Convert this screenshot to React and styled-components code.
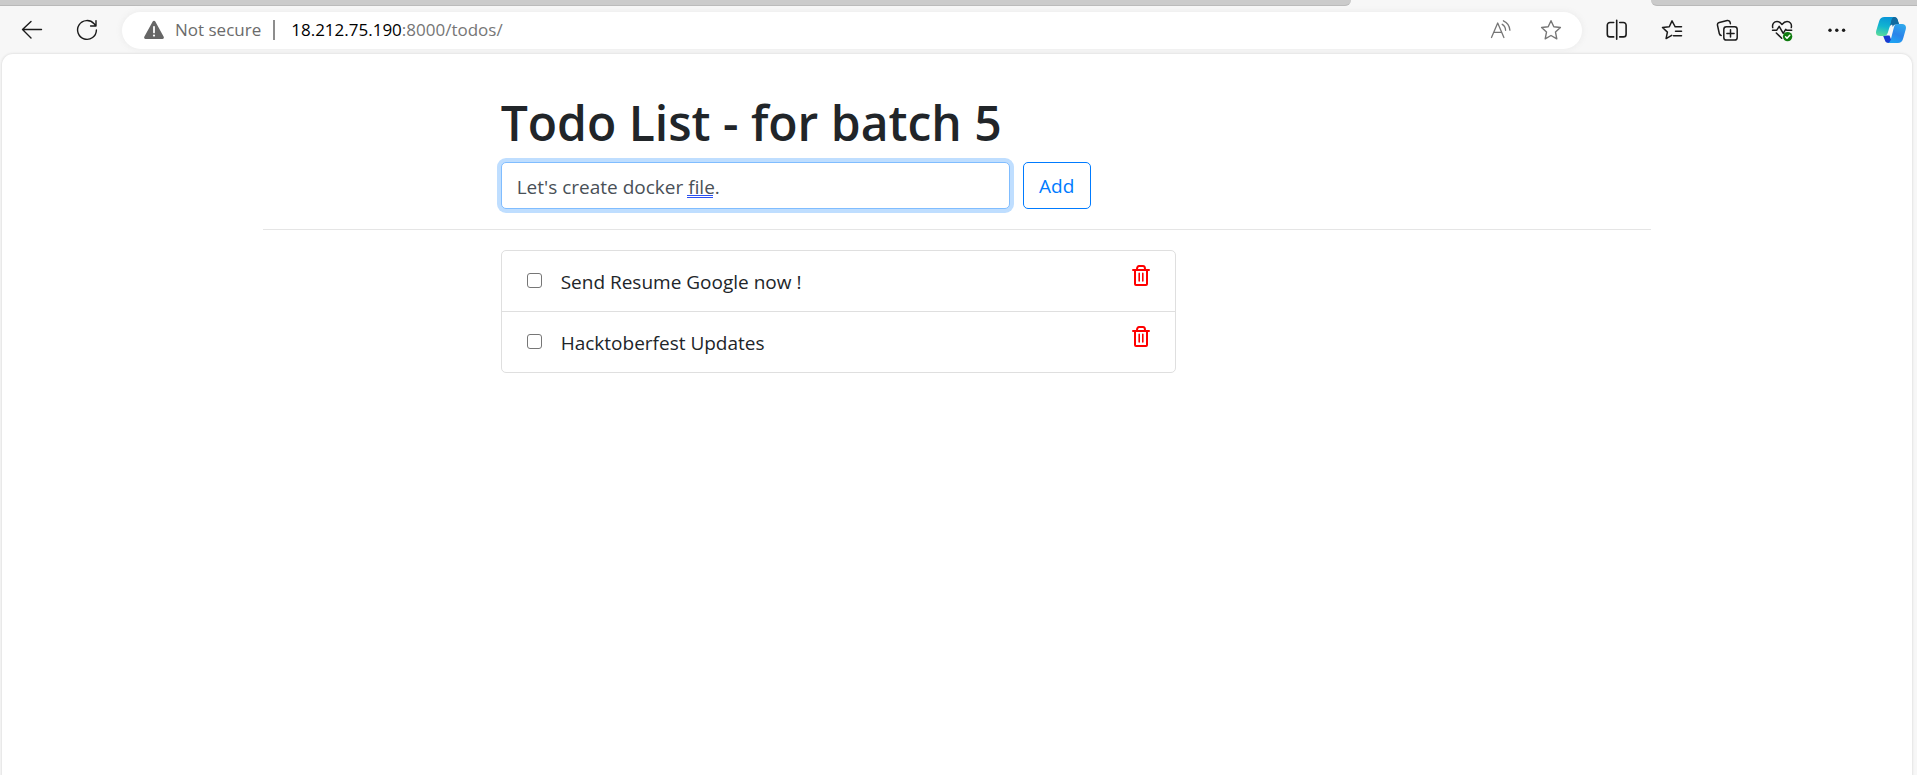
import React, { useState } from "react";
import styled, { createGlobalStyle } from "styled-components";

const GlobalStyle = createGlobalStyle`
  *, *::before, *::after { box-sizing: border-box; }
  body {
    margin: 0;
    background: #f7f7f7;
    color: #212529;
    font: 400 19px/30px "Open Sans", "Noto Sans", sans-serif;
  }
  button, input { font: inherit; }
`;

const Browser = styled.div`
  min-height: 100vh;
  display: flex;
  flex-direction: column;
`;

const TabStrip = styled.div`
  display: flex;
  height: 6px;
`;

const TabEdge = styled.div`
  flex: ${(p) => p.$grow} 1 0;
  background: ${(p) => (p.$active ? "#f7f7f7" : "#cbcbcb")};
  border-bottom: 1px solid ${(p) => (p.$active ? "#f7f7f7" : "#b9b9b9")};
  border-radius: ${(p) => p.$corners || "0"};
`;

const Toolbar = styled.header`
  display: flex;
  align-items: center;
  height: 48px;
  padding-left: 4px;
`;

const IconButton = styled.button`
  display: flex;
  align-items: center;
  justify-content: center;
  flex: none;
  width: ${(p) => p.$width || 55}px;
  height: 36px;
  padding: 0;
  border: 0;
  background: none;
  color: ${(p) => (p.$muted ? "#767676" : "#1b1b1b")};
`;

const AddressBar = styled.div`
  display: flex;
  align-items: center;
  flex: 1;
  height: 37px;
  margin: 0 7px 0 8px;
  padding: 0 6px 0 21px;
  border-radius: 19px;
  background: #fff;
  box-shadow: 0 0 5px 2px #efefef;
  font-size: 17px;
  line-height: 24px;
  color: #767676;
`;

const Security = styled.span`
  display: flex;
  align-items: center;
  gap: 10px;
  color: #6b6b6b;
`;

const Divider = styled.span`
  width: 2px;
  height: 20px;
  margin: 0 16px 0 12px;
  background: #8d8d8d;
`;

const Url = styled.span`
  flex: 1;
`;

const Host = styled.span`
  color: #000;
`;

const Page = styled.main`
  flex: 1;
  margin: 0 5px 0 2px;
  padding-top: 39px;
  border-radius: 11px 11px 0 0;
  background: #fff;
  box-shadow: 0 0 2px 1px #e4e4e4;
`;

const Container = styled.div`
  max-width: 1426px;
  margin: 0 auto;
  padding: 0 19px;
`;

const Row = styled.div`
  display: flex;
  margin: 0 -19px;
`;

const Column = styled.div`
  flex: 0 0 50%;
  margin-left: calc(100% / 6);
  padding: 0 19px;
`;

const Title = styled.h1`
  margin: 0 0 9px;
  font-size: 48px;
  line-height: 60px;
  font-weight: 600;
  white-space: nowrap;
`;

const Form = styled.form`
  display: flex;
  gap: 13px;
  max-width: 590px;
`;

const Field = styled.div`
  position: relative;
  flex: 1;
`;

const TextInput = styled.input`
  display: block;
  width: 100%;
  height: 47px;
  padding: 2px 15px 0;
  border: 1px solid #80bdff;
  border-radius: 5px;
  outline: 0;
  background: #fff;
  color: #495057;
  box-shadow: 0 0 0 4px #bfdeff;
`;

const GrammarMark = styled.span`
  position: absolute;
  left: 186px;
  top: 33px;
  width: 26px;
  height: 3px;
  border: solid #2b4ff0;
  border-width: 1px 0;
  pointer-events: none;
`;

const AddButton = styled.button`
  width: 68px;
  height: 47px;
  padding: 0;
  border: 1px solid #007bff;
  border-radius: 5px;
  background: #fff;
  color: #007bff;
`;

const Rule = styled.hr`
  margin: 20px 0;
  border: 0;
  border-top: 1px solid #e5e5e5;
`;

const List = styled.ul`
  margin: 0;
  padding: 0;
  list-style: none;
  border: 1px solid #dfdfdf;
  border-radius: 5px;
`;

const Item = styled.li`
  display: flex;
  align-items: center;
  justify-content: space-between;
  padding: 14px 25px;

  & + & { border-top: 1px solid #dfdfdf; }
`;

const ItemLabel = styled.label`
  display: flex;
  align-items: center;
  gap: 19px;
  padding-top: 2px;
`;

const Checkbox = styled.input`
  appearance: none;
  width: 15px;
  height: 15px;
  margin: 0 0 3px;
  border: 1px solid #767676;
  border-radius: 3px;
  background: #fff;

  &:checked { background: #0075ff; }
`;

const DeleteButton = styled.button`
  display: flex;
  align-self: flex-start;
  height: 21px;
  padding: 0;
  border: 0;
  background: none;
  color: #f00;
`;

const Svg = styled.svg.attrs({ "aria-hidden": true })`
  display: block;
  fill: none;
  stroke: currentColor;
  stroke-linecap: round;
  stroke-linejoin: round;
`;

const Icon = ({ size = 24, stroke = 1.4, children }) => (
  <Svg width={size} height={size} viewBox="0 0 24 24" strokeWidth={stroke}>
    {children}
  </Svg>
);

const BackIcon = () => (
  <Icon><path d="M21.5 11.5H2.5M11 3.5l-8.5 8 8.5 8.5" /></Icon>
);

const RefreshIcon = () => (
  <Icon><path d="M21.4 12a9.4 9.4 0 1 1-2.3-6.2l1.8 2M21 2.6V8h-5.4" /></Icon>
);

const WarningIcon = () => (
  <Svg width="22" height="20" viewBox="0 0 22 20">
    <path d="M9.7 1.6a1.5 1.5 0 0 1 2.6 0l8.4 15.2a1.4 1.4 0 0 1-1.2 2.1h-17a1.4 1.4 0 0 1-1.2-2.1z" fill="#666" stroke="none" />
    <path d="M11 6.8v5.6" stroke="#fff" strokeWidth="1.8" />
    <circle cx="11" cy="15.6" r="1.1" fill="#fff" stroke="none" />
  </Svg>
);

const ReadAloudIcon = () => (
  <Icon stroke={1.3}>
    <path d="M2.5 19.5L8.7 5l6.2 14.5M4.6 14.4h8.2M13.2 6.3c1.9 1 3.2 3.2 3.4 6M14.4 2.8c3.6 1.6 6.2 5 6.5 9.4" />
  </Icon>
);

const StarIcon = () => (
  <Icon>
    <path d="M12 2.7l2.8 6 6.6.8-4.9 4.6 1.3 6.7L12 17.5l-5.8 3.3 1.3-6.7-4.9-4.6 6.6-.8z" />
  </Icon>
);

const SplitIcon = () => (
  <Icon stroke={1.6}>
    <path d="M8.7 4.5H5a2.7 2.7 0 0 0-2.7 2.7v9a2.7 2.7 0 0 0 2.7 2.7h3.7M14.7 4.5h3.7a2.7 2.7 0 0 1 2.7 2.7v9a2.7 2.7 0 0 1-2.7 2.7h-3.7M11.7 2.2v19" />
  </Icon>
);

const FavoritesIcon = () => (
  <Icon stroke={1.5}>
    <path d="M18.500 8.700L15 8.500 12 2.900 9.300 8.700l-6.800.8 4.900 4.600-1.300 6.500 5.600-3.200M15 8.700h6.500M15.500 13.200h6M13.500 17.800h8" />
  </Icon>
);

const CollectionsIcon = () => (
  <Icon stroke={1.5}>
    <rect x="8.8" y="8.8" width="13.4" height="13.2" rx="2.6" />
    <path d="M15.5 11.8v7.2M11.9 15.4h7.2M6.2 17.4a2.4 2.4 0 0 1-1.9-1.9L2.5 7.3a2.4 2.4 0 0 1 1.8-2.9l7.9-1.8a2.4 2.4 0 0 1 2.9 1.8l.3 1.3" />
  </Icon>
);

const HealthIcon = () => (
  <Icon stroke={1.5}>
    <path d="M2.7 9.6C1.9 5.9 4.2 3.5 7 3.5c2.2 0 3.6 1.2 5 2.9 1.4-1.7 2.8-2.9 5-2.9 2.9 0 5.1 2.4 4.3 6.1M2.5 12.3h4.1l2.6-4 4 7 2.5-4 1 1h5M6.3 15l5.4 5.3" />
    <circle cx="17.6" cy="18.6" r="4.7" fill="#107c10" stroke="none" />
    <path d="M15.6 18.8l1.4 1.4 2.8-3" stroke="#fff" />
  </Icon>
);

const MoreIcon = () => (
  <Icon>
    <g fill="currentColor" stroke="none">
      <circle cx="5" cy="12.2" r="1.7" />
      <circle cx="11.8" cy="12.2" r="1.7" />
      <circle cx="18.6" cy="12.2" r="1.7" />
    </g>
  </Icon>
);

const CopilotIcon = () => (
  <Svg width="30" height="26" viewBox="0 0 30 26">
    <defs>
      <linearGradient id="leftRibbon" x1="0.5" y1="0" x2="0.3" y2="1">
        <stop offset="0" stopColor="#0996d8" />
        <stop offset="0.5" stopColor="#12b5d0" />
        <stop offset="1" stopColor="#5bdc9a" />
      </linearGradient>
      <linearGradient id="rightRibbon" x1="0.7" y1="0" x2="0.3" y2="1">
        <stop offset="0" stopColor="#2fa8ec" />
        <stop offset="0.55" stopColor="#2b83ea" />
        <stop offset="1" stopColor="#1da5f3" />
      </linearGradient>
    </defs>
    <g stroke="none">
      <path d="M14 0h4c2 0 3 1 3.6 2.7L23 7.500H17c-2 0-3 1-3.500 3z" fill="#126a9f" />
      <path d="M7 18.500h6.500l3 7.500h-4c-2 0-3-.8-3.700-3z" fill="#183bd0" />
      <path d="M8.500 0H18.500c-1.700.4-2.500 1.900-3 3.500l-3.700 12.200C11 18.300 9.500 19 7.500 19H4c-3.200 0-4.700-2-3.700-5.600L3.200 4C4 1.300 5.800 0 8.500 0z" fill="url(#leftRibbon)" />
      <path d="M21.500 7H26c3.200 0 4.600 2 3.700 5.500L27 22c-.8 2.700-2.500 4-5.200 4H11.800c1.800-.4 2.500-1.900 3-3.500L18 10c.6-2 1.500-3 3.500-3z" fill="url(#rightRibbon)" />
      <path d="M18 0c2 0 3 1 3.600 2.700L23 7h-2c-2.500 0-3.500 1.200-4.200 3l-1.500-5.500C15.900 2 16.500.5 18 0z" fill="#126a9f" />
    </g>
  </Svg>
);

const TrashIcon = () => (
  <Svg width="18" height="21" viewBox="0 0 18 21" strokeWidth="2">
    <path d="M1 5h16M3 5v14a1 1 0 0 0 1 1h10a1 1 0 0 0 1-1V5" />
    <path d="M5 4c0-1.800 1-3 2-3h4c1 0 2 1.200 2 3" />
    <path d="M7.200 8.200v7.800M10.800 8.200v7.800" strokeWidth="1.600" />
  </Svg>
);

const TodoItem = ({ text }) => (
  <Item>
    <ItemLabel>
      <Checkbox type="checkbox" />
      {text}
    </ItemLabel>
    <DeleteButton type="button" aria-label={`Delete ${text}`}>
      <TrashIcon />
    </DeleteButton>
  </Item>
);

export default function App() {
  const [draft, setDraft] = useState("Let's create docker file.");
  const todos = ["Send Resume Google now !", "Hacktoberfest Updates"];

  return (
    <Browser>
      <GlobalStyle />
      <TabStrip>
        <TabEdge $grow={1351} $corners="0 0 6px 0" />
        <TabEdge $grow={300} $active />
        <TabEdge $grow={266} $corners="0 0 0 6px" />
      </TabStrip>
      <Toolbar>
        <IconButton aria-label="Back"><BackIcon /></IconButton>
        <IconButton aria-label="Refresh"><RefreshIcon /></IconButton>
        <AddressBar>
          <Security><WarningIcon />Not secure</Security>
          <Divider />
          <Url><Host>18.212.75.190</Host>:8000/todos/</Url>
          <IconButton $muted $width={50} aria-label="Read aloud"><ReadAloudIcon /></IconButton>
          <IconButton $muted $width={50} aria-label="Add to favorites"><StarIcon /></IconButton>
        </AddressBar>
        <IconButton aria-label="Split screen"><SplitIcon /></IconButton>
        <IconButton aria-label="Favorites"><FavoritesIcon /></IconButton>
        <IconButton aria-label="Collections"><CollectionsIcon /></IconButton>
        <IconButton aria-label="Browser essentials"><HealthIcon /></IconButton>
        <IconButton aria-label="More"><MoreIcon /></IconButton>
        <IconButton $width={53} aria-label="Copilot"><CopilotIcon /></IconButton>
      </Toolbar>
      <Page>
        <Container>
          <Row>
            <Column>
              <Title>Todo List - for batch 5</Title>
              <Form onSubmit={(e) => e.preventDefault()}>
                <Field>
                  <TextInput
                    type="text"
                    aria-label="New todo"
                    spellCheck={false}
                    value={draft}
                    onChange={(e) => setDraft(e.target.value)}
                  />
                  {draft.includes("docker file") && <GrammarMark />}
                </Field>
                <AddButton type="submit">Add</AddButton>
              </Form>
            </Column>
          </Row>
          <Rule />
          <Row>
            <Column>
              <List>
                {todos.map((text) => <TodoItem key={text} text={text} />)}
              </List>
            </Column>
          </Row>
        </Container>
      </Page>
    </Browser>
  );
}
